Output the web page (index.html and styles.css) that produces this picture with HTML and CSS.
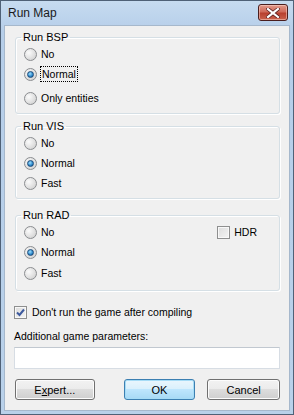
FILE: index.html
```html
<!DOCTYPE html>
<html lang="en">
<head>
  <meta charset="UTF-8">
  <title>Run Map</title>
  <link rel="stylesheet" href="styles.css">
</head>
<body>
  <div class="janela">
    <div class="titulo">
      <span class="titulo-texto">Run Map</span>
      <button class="fechar" type="button" aria-label="Close">
        <svg width="14" height="10" viewBox="0 0 14 10">
          <path d="M2 1 L12 9 M12 1 L2 9" stroke="#5a1f1f" stroke-width="3.6" stroke-linecap="square"/>
          <path d="M2 1 L12 9 M12 1 L2 9" stroke="#fff" stroke-width="2.2" stroke-linecap="square"/>
        </svg>
      </button>
    </div>

    <div class="cliente">
      <fieldset class="grupo grupo-bsp">
        <legend>Run BSP</legend>
        <label class="opcao"><span class="radio"></span>No</label>
        <label class="opcao"><span class="radio marcado"></span><span class="foco">Normal</span></label>
        <label class="opcao extra"><span class="radio"></span>Only entities</label>
      </fieldset>

      <fieldset class="grupo grupo-vis">
        <legend>Run VIS</legend>
        <label class="opcao"><span class="radio"></span>No</label>
        <label class="opcao"><span class="radio marcado"></span>Normal</label>
        <label class="opcao"><span class="radio"></span>Fast</label>
      </fieldset>

      <fieldset class="grupo grupo-rad">
        <legend>Run RAD</legend>
        <div class="linha-rad">
          <div class="coluna">
            <label class="opcao"><span class="radio"></span>No</label>
            <label class="opcao"><span class="radio marcado"></span>Normal</label>
            <label class="opcao ultima"><span class="radio"></span>Fast</label>
          </div>
          <label class="opcao hdr"><span class="caixinha"></span>HDR</label>
        </div>
      </fieldset>

      <label class="opcao nao-rodar">
        <span class="caixinha">
          <svg width="9" height="9" viewBox="0 0 9 9"><path d="M1 4.5 L3.5 7 L8 1.5" fill="none" stroke="#3d5a9e" stroke-width="2"/></svg>
        </span>Don't run the game after compiling
      </label>

      <label class="rotulo" for="params">Additional game parameters:</label>
      <input class="campo" type="text" id="params">

      <div class="botoes">
        <button class="botao" type="button">E<u>x</u>pert...</button>
        <button class="botao padrao" type="button">OK</button>
        <button class="botao" type="button">Cancel</button>
      </div>
    </div>
  </div>
</body>
</html>
```

FILE: styles.css
```css
body {
  margin: 0;
  font-family: "Liberation Sans", Arial, sans-serif;
  font-size: 10.5px;
  color: #000;
  background: #fff;
}
.janela {
  width: 294px;
  height: 415px;
  box-sizing: border-box;
  border: 1px solid #4f6177;
  padding: 0 3px 3px 3px;
  background: linear-gradient(#c6dbf0, #b6cee9 30px, #b9d1ea);
  display: flex;
  flex-direction: column;
}
.titulo {
  height: 24px;
  display: flex;
  justify-content: space-between;
  align-items: flex-start;
  padding-left: 4px;
}
.titulo-texto {
  font-size: 12px;
  line-height: 24px;
  color: #1a1a1a;
}
.fechar {
  margin-top: 3px;
  margin-right: 2px;
  width: 30px;
  height: 17px;
  padding: 0;
  border: 1px solid #4a1e1e;
  border-radius: 3px;
  background: linear-gradient(#e29a8c, #cf6a5a 45%, #b8402f 55%, #c9624d);
  display: flex;
  align-items: center;
  justify-content: center;
  box-shadow: inset 0 0 0 1px rgba(255, 220, 210, 0.5);
}
.cliente {
  flex: 1;
  background: #f0f0f0;
  border: 1px solid #a6b8cc;
  padding: 4px 9px 0 9px;
  display: flex;
  flex-direction: column;
}
.grupo {
  margin: 0 0 0 1px;
  padding: 0 8px 5px 8px;
  border: 1px solid #d5dfe5;
  border-radius: 3px;
  box-shadow: inset 1px 1px 0 #fff, 1px 1px 0 #fff;
}
.grupo legend {
  padding: 0 2px;
  margin-left: -3px;
  line-height: 14px;
  font-size: 11px;
}
.grupo-vis {
  margin-top: 5px;
}
.grupo-rad {
  margin-top: 9px;
  padding-bottom: 7px;
}
.opcao {
  display: flex;
  align-items: center;
  height: 20px;
  gap: 4px;
}
.extra {
  margin-top: 4px;
}
.ultima {
  margin-top: 1px;
}
.radio {
  width: 11px;
  height: 11px;
  border-radius: 50%;
  border: 1px solid #8b8d90;
  background: radial-gradient(circle at 35% 35%, #fbfbfb, #d9d9d9 70%, #c4c4c4);
  display: flex;
  align-items: center;
  justify-content: center;
}
.radio.marcado::after {
  content: "";
  width: 5px;
  height: 5px;
  border-radius: 50%;
  border: 1px solid #1d4c7a;
  background: radial-gradient(circle at 40% 35%, #9fe0ff, #2b86c9 60%, #0f4f8a);
}
.foco {
  outline: 1px dotted #000;
  outline-offset: 0;
  padding: 0 1px;
  line-height: 14px;
}
.linha-rad {
  display: flex;
  justify-content: space-between;
  align-items: flex-start;
}
.hdr {
  margin-right: 14px;
}
.caixinha {
  width: 11px;
  height: 11px;
  border: 1px solid #8e8f8f;
  background: linear-gradient(135deg, #dcdcdc, #f4f4f4);
  box-shadow: inset 0 0 0 1px #f8f8f8;
  display: flex;
  align-items: center;
  justify-content: center;
}
.nao-rodar {
  margin-top: 11px;
  margin-left: 0;
  gap: 5px;
}
.rotulo {
  margin-top: 7px;
  line-height: 14px;
}
.campo {
  margin: 4px 0 0 0;
  height: 22px;
  box-sizing: border-box;
  border: 1px solid #d7dde4;
  border-top-color: #c1c8d0;
  background: #fff;
  font: inherit;
}
.botoes {
  margin-top: 10px;
  display: flex;
  justify-content: space-between;
  padding-left: 1px;
}
.botao {
  width: 80px;
  height: 21px;
  font: inherit;
  font-size: 11px;
  color: #000;
  border: 1px solid #707070;
  border-radius: 3px;
  background: linear-gradient(#f2f2f2, #ebebeb 50%, #dddddd 50%, #cfcfcf);
  box-shadow: inset 0 0 0 1px #fcfcfc;
  padding: 0;
}
.botao.padrao {
  width: 72px;
  margin-left: 29px;
  border-color: #3c7fb1;
  box-shadow: inset 0 0 0 1px #a6dcf6;
  background: linear-gradient(#eaf6fd, #d9f0fc 50%, #bee6fd 50%, #a7d9f5);
}
.botao:last-child {
  width: 73px;
  margin-left: 12px;
}
.botao:first-child {
  margin-left: 0;
}
```
